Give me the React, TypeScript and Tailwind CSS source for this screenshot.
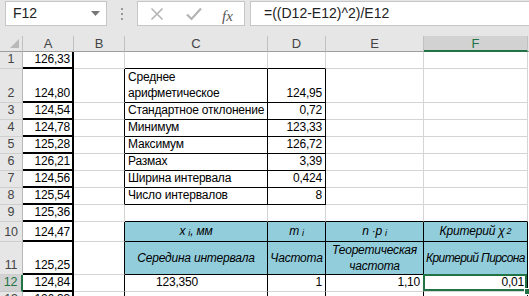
import type { ReactNode } from "react";

type Spec = {
  t?: ReactNode;
  a?: "l" | "r" | "c";
  rb?: boolean; // black right border
  bb?: boolean; // black bottom border
  blue?: boolean;
  mid?: boolean;
  it?: boolean;
  sel?: boolean;
  pad?: string;
};

const WIDTHS = ["w-[51px]", "w-[143px]", "w-[58px]", "w-[98px]", "w-[104px]"];

const ALIGN = {
  l: "justify-start text-left",
  r: "justify-end text-right",
  c: "justify-center text-center",
};

function Cell({ s, w }: { s: Spec; w: string }) {
  const cls = [
    "relative flex shrink-0 whitespace-nowrap border-r border-b px-[3px] leading-[15px]",
    w,
    s.rb ? "border-r-black" : "border-r-[#d4d4d4]",
    s.bb ? "border-b-black" : "border-b-[#d4d4d4]",
    ALIGN[s.a ?? "l"],
    s.mid ? "items-center" : "items-end pb-[1px]",
    s.blue ? "bg-[#92cddc]" : "bg-white",
    s.it ? "italic" : "",
    s.pad ?? "",
  ].join(" ");
  return (
    <div className={cls}>
      {s.t}
      {s.sel && (
        <>
          <div className="absolute -left-px -top-px right-0 bottom-0 border-2 border-[#217346]" />
          <div className="absolute -bottom-[4px] -right-[4px] z-10 h-[7px] w-[7px] border border-white bg-[#217346]" />
        </>
      )}
    </div>
  );
}

function Row({
  n,
  h,
  a,
  cells,
  active = false,
}: {
  n: number;
  h: string;
  a: string;
  cells: Spec[];
  active?: boolean;
}) {
  return (
    <div className={`flex ${h}`}>
      {/* row header */}
      <div
        className={
          active
            ? "flex w-[23px] shrink-0 items-end justify-center border-r-2 border-b border-r-[#217346] border-b-[#c8c8c8] bg-[#d2d2d2] pb-[1px] text-[12.5px] leading-[15px] text-[#217346]"
            : "flex w-[23px] shrink-0 items-end justify-center border-r border-b border-r-[#b8b8b8] border-b-[#cfcfcf] bg-[#e6e6e6] pb-[1px] text-[12.5px] leading-[15px] text-[#444]"
        }
      >
        {n}
      </div>
      {/* column A */}
      <div className="flex w-[51px] shrink-0 items-end justify-end border-r-2 border-b-2 border-black bg-white pr-[2px] leading-[15px]">
        {a}
      </div>
      {cells.map((s, i) => (
        <Cell key={i} s={s} w={WIDTHS[i]} />
      ))}
    </div>
  );
}

function Sub({ children }: { children: ReactNode }) {
  return <sub className="relative top-[1px] ml-[3px] text-[9px]">{children}</sub>;
}

export default function App() {
  const tbl = (c: ReactNode, d: ReactNode): Spec[] => [
    { rb: true },
    { t: c, bb: true, rb: true, a: "l" },
    { t: d, bb: true, rb: true, a: "r" },
    {},
    {},
  ];

  return (
    <div className="h-[296px] w-[529px] overflow-hidden bg-white font-['Liberation_Sans',Arial,sans-serif] text-[12px] tracking-[-0.2px] text-black">
      {/* Formula bar */}
      <div className="flex h-[36px] bg-[#e6e6e6] pt-px tracking-normal">
        <div className="ml-[5px] flex h-[25px] w-[102px] items-center justify-between border border-[#c6c6c6] bg-white pl-[7px] pr-[6px]">
          <span className="text-[14px] text-[#222]">F12</span>
          <svg width="9" height="5" viewBox="0 0 9 5">
            <path d="M0 0h9L4.5 5z" fill="#777" />
          </svg>
        </div>
        <div className="flex h-[25px] w-[30px] flex-col items-center justify-center gap-[3px]">
          <span className="h-[2px] w-[2px] bg-[#999]" />
          <span className="h-[2px] w-[2px] bg-[#999]" />
          <span className="h-[2px] w-[2px] bg-[#999]" />
        </div>
        <div className="relative flex h-[25px] w-[108px] items-center border border-[#c6c6c6] bg-white">
          <svg className="absolute left-[12px] top-[5px]" width="14" height="14" viewBox="0 0 14 14">
            <path d="M1.5 1.5l11 11M12.5 1.5l-11 11" stroke="#b4b4b4" strokeWidth="1.6" />
          </svg>
          <svg className="absolute left-[48px] top-[5px]" width="16" height="14" viewBox="0 0 16 14">
            <path d="M1 7.5l4.5 4.5L15 1.5" stroke="#b4b4b4" strokeWidth="2.2" fill="none" />
          </svg>
          <span className="absolute left-[84px] top-[3px] font-['Liberation_Serif',serif] text-[15px] italic text-[#555]">
            fx
          </span>
        </div>
        <div className="ml-[5px] flex h-[25px] flex-1 items-center border border-r-0 border-[#c6c6c6] bg-white pl-[13px] text-[14px] text-[#222]">
          =((D12-E12)^2)/E12
        </div>
      </div>

      {/* Column headers */}
      <div className="flex h-[16px] text-[13px] leading-[15px] tracking-normal text-[#444]">
        <div className="relative w-[23px] shrink-0 border-r border-b border-r-[#c0c0c0] border-b-[#9e9e9e] bg-[#e6e6e6]">
          <svg className="absolute bottom-[3px] right-[3px]" width="9" height="9" viewBox="0 0 9 9">
            <path d="M9 0v9H0z" fill="#b9b9b9" />
          </svg>
        </div>
        <div className="flex w-[51px] shrink-0 justify-center border-r border-b border-r-[#c0c0c0] border-b-[#9e9e9e] bg-[#e6e6e6]">A</div>
        <div className="flex w-[51px] shrink-0 justify-center border-r border-b border-r-[#c0c0c0] border-b-[#9e9e9e] bg-[#e6e6e6]">B</div>
        <div className="flex w-[143px] shrink-0 justify-center border-r border-b border-r-[#c0c0c0] border-b-[#9e9e9e] bg-[#e6e6e6]">C</div>
        <div className="flex w-[58px] shrink-0 justify-center border-r border-b border-r-[#c0c0c0] border-b-[#9e9e9e] bg-[#e6e6e6]">D</div>
        <div className="flex w-[98px] shrink-0 justify-center border-r border-b border-r-[#c0c0c0] border-b-[#9e9e9e] bg-[#e6e6e6]">E</div>
        <div className="flex w-[104px] shrink-0 justify-center border-r border-b-2 border-r-[#c0c0c0] border-b-[#217346] bg-[#d2d2d2] text-[#217346]">F</div>
        <div className="flex-1 border-b border-b-[#9e9e9e] bg-[#e6e6e6]" />
      </div>

      {/* Sheet */}
      <Row n={1} h="h-[17px]" a="126,33" cells={[{}, { bb: true }, { bb: true }, {}, {}]} />
      <Row
        n={2}
        h="h-[34px]"
        a="124,80"
        cells={tbl(
          <span className="leading-[16px]">
            Среднее
            <br />
            арифметическое
          </span>,
          "124,95",
        )}
      />
      <Row n={3} h="h-[17px]" a="124,54" cells={tbl("Стандартное отклонение", "0,72")} />
      <Row n={4} h="h-[17px]" a="124,78" cells={tbl("Минимум", "123,33")} />
      <Row n={5} h="h-[17px]" a="125,28" cells={tbl("Максимум", "126,72")} />
      <Row n={6} h="h-[17px]" a="126,21" cells={tbl("Размах", "3,39")} />
      <Row n={7} h="h-[17px]" a="124,56" cells={tbl("Ширина интервала", "0,424")} />
      <Row n={8} h="h-[17px]" a="125,54" cells={tbl("Число интервалов", "8")} />
      <Row n={9} h="h-[17px]" a="125,36" cells={[{}, { bb: true }, { bb: true }, { bb: true }, { bb: true }]} />
      <Row
        n={10}
        h="h-[20px]"
        a="124,47"
        cells={[
          { rb: true },
          { t: <span>x<Sub>i</Sub>, мм</span>, a: "c", blue: true, rb: true, bb: true, mid: true, it: true },
          { t: <span>m<Sub>i</Sub></span>, a: "c", blue: true, rb: true, bb: true, mid: true, it: true },
          { t: <span>n ·p<Sub>i</Sub></span>, a: "c", blue: true, rb: true, bb: true, mid: true, it: true },
          {
            t: (
              <span>
                Критерий χ<sup className="relative -top-[1px] ml-[2px] text-[9px]">2</sup>
              </span>
            ),
            a: "c",
            blue: true,
            rb: true,
            bb: true,
            mid: true,
            it: true,
          },
        ]}
      />
      <Row
        n={11}
        h="h-[33px]"
        a="125,25"
        cells={[
          { rb: true },
          { t: "Середина интервала", a: "c", blue: true, rb: true, bb: true, mid: true, it: true },
          { t: "Частота", a: "c", blue: true, rb: true, bb: true, mid: true, it: true, pad: "px-0" },
          {
            t: (
              <span>
                Теоретическая
                <br />
                частота
              </span>
            ),
            a: "c",
            blue: true,
            rb: true,
            bb: true,
            mid: true,
            it: true,
            pad: "px-0 leading-[16px]",
          },
          {
            t: "Критерий Пирсона",
            a: "c",
            blue: true,
            rb: true,
            bb: true,
            mid: true,
            it: true,
            pad: "px-0 tracking-[-0.6px]",
          },
        ]}
      />
      <Row
        n={12}
        h="h-[17px]"
        a="124,84"
        active
        cells={[
          { rb: true },
          { t: "123,350", a: "l", rb: true, pad: "pl-[31px]" },
          { t: "1", a: "r", rb: true },
          { t: "1,10", a: "r", rb: true },
          { t: "0,01", a: "r", rb: true, sel: true },
        ]}
      />
      <Row
        n={13}
        h="h-[17px]"
        a="126,33"
        cells={[{ rb: true }, { rb: true }, { rb: true }, { rb: true }, { rb: true }]}
      />
    </div>
  );
}
